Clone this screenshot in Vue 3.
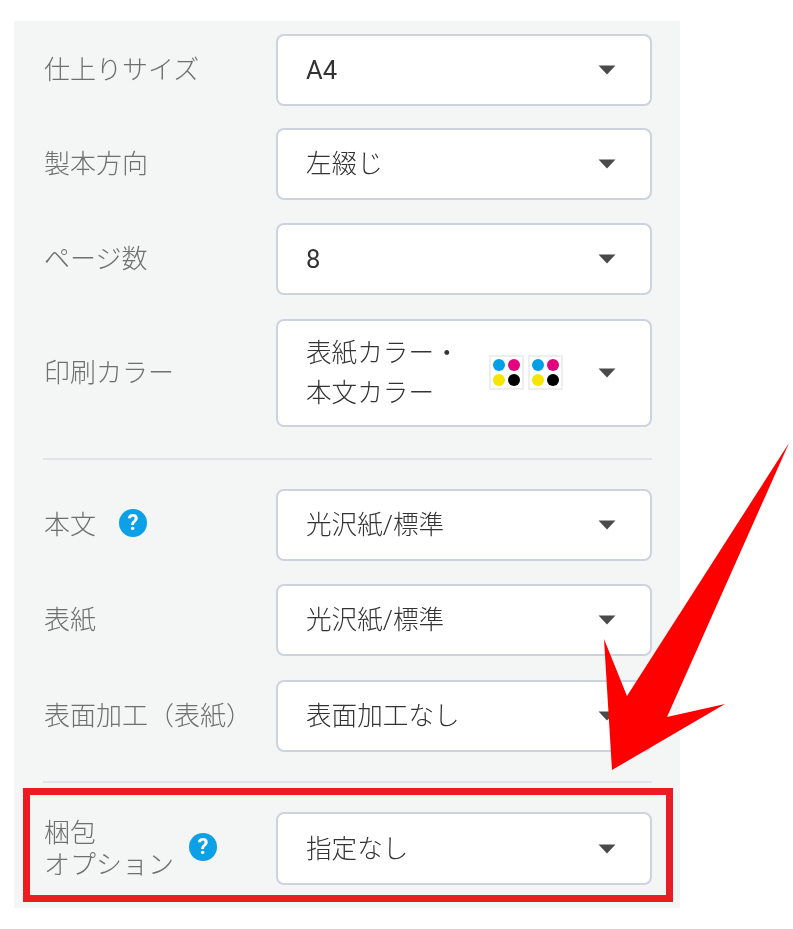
<script setup>
const chipDots = ['#00a0e9', '#e4007f', '#f5e500', '#000000']
const chips = [0, 1]
const topRows = [
  { label: '仕上りサイズ', value: 'A4', latin: true },
  { label: '製本方向', value: '左綴じ' },
  { label: 'ページ数', value: '8', latin: true },
]
const paperRows = [
  { label: '本文', value: '光沢紙/標準', help: true },
  { label: '表紙', value: '光沢紙/標準' },
  { label: '表面加工（表紙）', value: '表面加工なし' },
]
</script>

<template>
  <div class="page">
    <div class="panel">
      <section class="group group-top">
        <div v-for="row in topRows" :key="row.label" class="row">
          <div class="label">{{ row.label }}</div>
          <div class="select">
            <span class="value" :class="{ 'value-latin': row.latin }">{{ row.value }}</span>
            <svg class="caret" width="18" height="10" viewBox="0 0 18 10"><path d="M0.5 0.5H17.5L9 9.5Z" fill="#4a4a4a" /></svg>
          </div>
        </div>
        <div class="row row-color">
          <div class="label">印刷カラー</div>
          <div class="select select-tall">
            <span class="value value-lines">表紙カラー・<br />本文カラー</span>
            <div class="chips">
              <div v-for="c in chips" :key="c" class="chip">
                <i v-for="d in chipDots" :key="d" class="dot" :style="{ background: d }"></i>
              </div>
            </div>
            <svg class="caret" width="18" height="10" viewBox="0 0 18 10"><path d="M0.5 0.5H17.5L9 9.5Z" fill="#4a4a4a" /></svg>
          </div>
        </div>
      </section>

      <section class="group group-paper">
        <div v-for="row in paperRows" :key="row.label" class="row">
          <div class="label label-flex">
            <span>{{ row.label }}</span>
            <span v-if="row.help" class="help help-inline">?</span>
          </div>
          <div class="select">
            <span class="value">{{ row.value }}</span>
            <svg class="caret" width="18" height="10" viewBox="0 0 18 10"><path d="M0.5 0.5H17.5L9 9.5Z" fill="#4a4a4a" /></svg>
          </div>
        </div>
      </section>

      <section class="group group-pack">
        <div class="row">
          <div class="label label-flex">
            <span class="label-lines">梱包<br />オプション</span>
            <span class="help help-pack">?</span>
          </div>
          <div class="select select-pack">
            <span class="value">指定なし</span>
            <svg class="caret" width="18" height="10" viewBox="0 0 18 10"><path d="M0.5 0.5H17.5L9 9.5Z" fill="#4a4a4a" /></svg>
          </div>
        </div>
      </section>

      <div class="highlight"></div>
    </div>

    <svg class="arrow" width="793" height="929" viewBox="0 0 793 929">
      <polygon points="789,443 667,717 725,704 612,770 604,639 627,696" fill="#ff0000" />
    </svg>
  </div>
</template>

<style>
html, body { margin: 0; background: #fff; }
</style>

<style scoped>
.page {
  position: relative;
  width: 793px;
  height: 929px;
  overflow: hidden;
  padding: 21px 0 0 14px;
  box-sizing: border-box;
  font-family: "Roboto", "Noto Sans CJK JP", sans-serif;
  filter: blur(0.35px);
}
.panel {
  position: relative;
  width: 666px;
  height: 887px;
  box-sizing: border-box;
  background: #f4f6f6;
  padding: 12.8px 28px 0 29px;
}
.group {
  display: flex;
  flex-direction: column;
  gap: 22.5px;
}
.group-top {
  padding-bottom: 31px;
  border-bottom: 2px solid #e1e4e6;
}
.group-paper {
  gap: 23.3px;
  padding: 29px 0 29.5px;
  border-bottom: 2px solid #e1e4e6;
}
.group-pack {
  padding-top: 29px;
}
.row {
  display: flex;
  align-items: center;
}
.row-color {
  margin-top: 1.7px;
}
.label {
  width: 233px;
  padding-left: 1px;
  box-sizing: border-box;
  font-size: 26px;
  font-weight: 300;
  line-height: 32px;
  color: #6f6f6f;
  white-space: nowrap;
}
.label-flex {
  display: flex;
  align-items: center;
}
.label-lines {
  width: 145px;
}
.select {
  flex: 1;
  height: 72px;
  box-sizing: border-box;
  display: flex;
  align-items: center;
  background: #fff;
  border: 2px solid #cdd2df;
  border-radius: 8px;
  padding: 0 34px 0 28px;
}
.select-tall {
  height: 108px;
}
.select-pack {
  height: 73px;
}
.value {
  font-size: 25.6px;
  font-weight: 300;
  line-height: 40px;
  color: #333;
  white-space: nowrap;
}
.value-latin {
  font-weight: 400;
}
.value-lines {
  width: 183px;
}
.caret {
  margin-left: auto;
  flex: none;
}
.chips {
  display: flex;
  gap: 4px;
}
.chip {
  width: 35px;
  height: 35px;
  box-sizing: border-box;
  border: 2px solid #eeeeee;
  background: #fff;
  display: grid;
  grid-template-columns: 12px 12px;
  grid-template-rows: 12px 12px;
  gap: 3px 3px;
  justify-content: center;
  align-content: center;
}
.dot {
  display: block;
  border-radius: 50%;
}
.help {
  display: inline-flex;
  align-items: center;
  justify-content: center;
  flex: none;
  width: 28px;
  height: 28px;
  border-radius: 50%;
  background: #0ca0e6;
  color: #fff;
  font-size: 22px;
  font-weight: 700;
  line-height: 1;
}
.help-inline {
  margin-left: 23px;
  margin-bottom: 4px;
}
.help-pack {
  margin-bottom: 4px;
}
.highlight {
  position: absolute;
  left: 9px;
  top: 766.5px;
  width: 650px;
  height: 114.5px;
  box-sizing: border-box;
  border: 7.5px solid #ed1c24;
}
.arrow {
  position: absolute;
  left: 0;
  top: 0;
  pointer-events: none;
}
</style>
